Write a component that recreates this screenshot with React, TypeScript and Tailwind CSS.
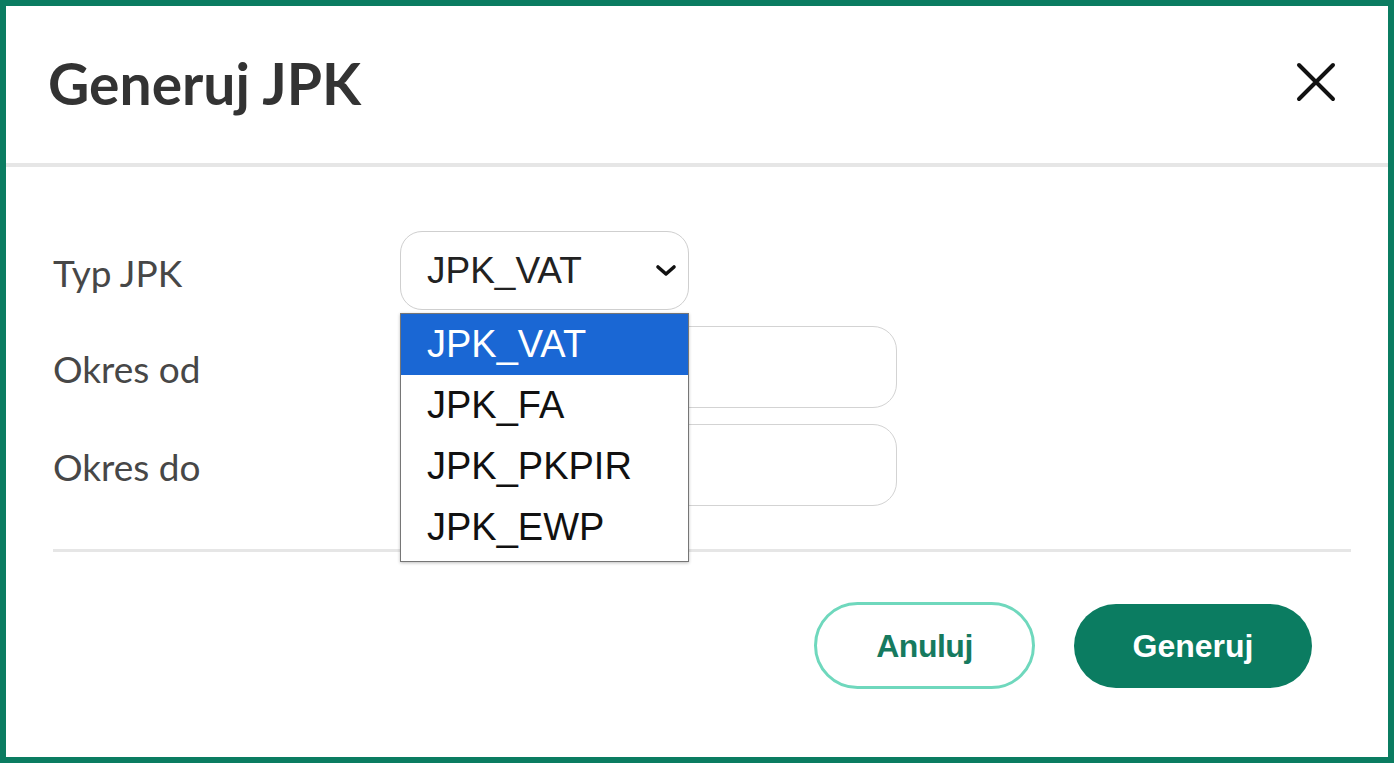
import { useState } from 'react';

const options = ['JPK_VAT', 'JPK_FA', 'JPK_PKPIR', 'JPK_EWP'];

export default function App() {
  const [value] = useState('JPK_VAT');

  return (
    <div className="w-[1394px] h-[763px] bg-white border-[6px] border-[#0b7c61] flex flex-col font-['Lato',sans-serif]">
      {/* Header */}
      <header className="h-[157px] flex items-center justify-between pl-[42px] pr-[52px]">
        <h1 className="text-[57px] leading-none font-bold text-[#333333] -mt-[2px]">Generuj JPK</h1>
        <button aria-label="Zamknij" className="w-[40px] h-[40px] flex items-center justify-center -mt-[5px]">
          <svg width="40" height="40" viewBox="0 0 40 40">
            <path d="M3 3 L37 37 M37 3 L3 37" stroke="#111" strokeWidth="4" strokeLinecap="round" />
          </svg>
        </button>
      </header>
      <div className="h-[4px] bg-[#e6e6e6]" />

      {/* Form */}
      <div className="pl-[47px] pr-[37px] pt-[64px] flex flex-col">
        <div className="flex flex-col gap-[16px]">
          <div className="flex items-center">
            <label className="w-[347px] text-[37px] text-[#474747] mt-[4px]">Typ JPK</label>
            <div className="relative">
              <div className="w-[289px] h-[79px] border border-[#cfcfcf] rounded-[22px] flex items-center justify-between pl-[26px] pr-[8px] font-['Liberation_Sans',Arial,sans-serif] text-[37px] text-[#222]">
                <span>{value}</span>
                <svg width="24" height="14" viewBox="0 0 24 14" className="mr-[2px]">
                  <path d="M4 3 L12 10 L20 3" fill="none" stroke="#111" strokeWidth="3.6" strokeLinecap="round" strokeLinejoin="round" />
                </svg>
              </div>
              <ul className="absolute left-0 top-[82px] z-10 w-[289px] h-[249px] bg-white border border-[#767676] shadow-[0_1px_3px_rgba(0,0,0,0.25)] font-['Liberation_Sans',Arial,sans-serif] text-[38px]">
                {options.map((o, i) => (
                  <li
                    key={o}
                    className={
                      i === 0
                        ? 'h-[61px] flex items-center pl-[26px] bg-[#1a67d4] text-white'
                        : 'h-[61px] flex items-center pl-[26px] text-[#111]'
                    }
                  >
                    {o}
                  </li>
                ))}
              </ul>
            </div>
          </div>
          <div className="flex items-center">
            <label className="w-[347px] text-[37px] text-[#474747] mt-[4px]">Okres od</label>
            <input className="w-[497px] h-[82px] border border-[#d3d3d3] rounded-[24px] outline-none" />
          </div>
          <div className="flex items-center">
            <label className="w-[347px] text-[37px] text-[#474747] mt-[4px]">Okres do</label>
            <input className="w-[497px] h-[82px] border border-[#d3d3d3] rounded-[24px] outline-none" />
          </div>
        </div>

        <div className="mt-[43px] h-[3px] bg-[#e6e6e6]" />

        <div className="mt-[50px] flex justify-end items-center gap-[39px] pr-[39px] font-['Liberation_Sans',Arial,sans-serif] font-bold text-[32px]">
          <button className="w-[221px] h-[87px] rounded-full border-[3px] border-[#6fd8bd] text-[#167a5f] tracking-[-0.5px]">Anuluj</button>
          <button className="w-[238px] h-[84px] rounded-full bg-[#0b7c61] text-white">Generuj</button>
        </div>
      </div>
    </div>
  );
}
